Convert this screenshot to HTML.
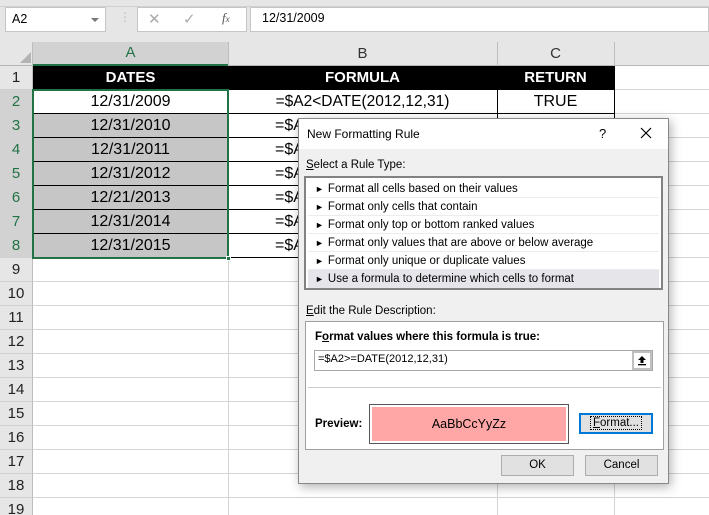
<!DOCTYPE html>
<html><head><meta charset="utf-8"><style>
*{margin:0;padding:0;box-sizing:border-box}
html,body{width:709px;height:515px;overflow:hidden}
body{position:relative;background:#fff;font-family:"Liberation Sans",sans-serif}
.a{position:absolute}
.t{position:absolute;font-size:16px;color:#000;text-align:center;line-height:24px}
.h{font-size:15px;font-weight:bold;color:#fff}
.rh{position:absolute;left:0;width:33px;height:24px;line-height:24px;text-align:center;font-size:15px;color:#222;background:#e6e6e6;border-bottom:1px solid #d0d0d0;border-right:1px solid #bdbdbd}
.d{font-size:11.5px;color:#000;position:absolute;white-space:nowrap}
.li{position:absolute;left:2px;right:2px;height:18px;line-height:18px;font-size:11.5px;padding-left:7px;border-bottom:1px solid #ececec}
.li b{font-weight:normal;font-size:9px;margin-right:4px}
.btn{position:absolute;background:#e1e1e1;border:1px solid #adadad;text-align:center;font-size:11.5px;line-height:18px}
</style></head><body>
<div class="a" style="left:0;top:0;width:709px;height:42px;background:#e6e6e6"></div>
<div class="a" style="left:0;top:6px;width:709px;height:1px;background:#d0d0d0"></div>
<div class="a" style="left:5px;top:7px;width:101px;height:25px;background:#fff;border:1px solid #c6c6c6"></div>
<div class="d" style="left:12px;top:12px;font-size:12.5px">A2</div>
<div class="a" style="left:91px;top:18px;border-left:4px solid transparent;border-right:4px solid transparent;border-top:4px solid #777"></div>
<div class="d" style="left:119px;top:10px;color:#bbb;font-size:12px">⋮</div>
<div class="a" style="left:137px;top:7px;width:110px;height:25px;background:#fff;border:1px solid #c6c6c6"></div>
<div class="d" style="left:148px;top:10px;color:#aaa;font-size:15px">✕</div>
<div class="d" style="left:183px;top:10px;color:#aaa;font-size:15px">✓</div>
<div class="d" style="left:222px;top:10px;color:#555;font-size:13px;font-style:italic;font-family:'Liberation Serif',serif">f<span style="font-size:9px">x</span></div>
<div class="a" style="left:250px;top:7px;width:459px;height:25px;background:#fff;border:1px solid #c6c6c6"></div>
<div class="d" style="left:262px;top:11px;font-size:12.5px">12/31/2009</div>
<div class="a" style="left:0;top:42px;width:709px;height:24px;background:#e6e6e6;border-bottom:1px solid #b5b5b5"></div>
<div class="a" style="left:20px;top:52px;border-left:11px solid transparent;border-bottom:11px solid #b3b3b3"></div>
<div class="a" style="left:33px;top:42px;width:195px;height:24px;background:#d2d2d2;border-bottom:2px solid #217346;text-align:center;line-height:22px;font-size:15px;color:#217346">A</div>
<div class="a" style="left:32px;top:42px;width:1px;height:24px;background:#bdbdbd"></div>
<div class="a" style="left:228px;top:42px;width:1px;height:24px;background:#bdbdbd"></div>
<div class="a" style="left:497px;top:42px;width:1px;height:24px;background:#bdbdbd"></div>
<div class="a" style="left:614px;top:42px;width:1px;height:24px;background:#bdbdbd"></div>
<div class="t" style="left:228px;top:42px;width:269px;line-height:23px;color:#333;font-size:15px">B</div>
<div class="t" style="left:497px;top:42px;width:117px;line-height:23px;color:#333;font-size:15px">C</div>
<div class="a" style="left:33px;top:66px;width:676px;height:449px;background:repeating-linear-gradient(to bottom,transparent 0 23px,#d4d4d4 23px 24px)"></div>
<div class="a" style="left:228px;top:66px;width:1px;height:449px;background:#d4d4d4"></div>
<div class="a" style="left:497px;top:66px;width:1px;height:449px;background:#d4d4d4"></div>
<div class="a" style="left:614px;top:66px;width:1px;height:449px;background:#d4d4d4"></div>
<div class="rh" style="top:66px">1</div>
<div class="rh" style="top:90px;background:#d2d2d2;color:#217346">2</div>
<div class="rh" style="top:114px;background:#d2d2d2;color:#217346">3</div>
<div class="rh" style="top:138px;background:#d2d2d2;color:#217346">4</div>
<div class="rh" style="top:162px;background:#d2d2d2;color:#217346">5</div>
<div class="rh" style="top:186px;background:#d2d2d2;color:#217346">6</div>
<div class="rh" style="top:210px;background:#d2d2d2;color:#217346">7</div>
<div class="rh" style="top:234px;background:#d2d2d2;color:#217346">8</div>
<div class="rh" style="top:258px">9</div>
<div class="rh" style="top:282px">10</div>
<div class="rh" style="top:306px">11</div>
<div class="rh" style="top:330px">12</div>
<div class="rh" style="top:354px">13</div>
<div class="rh" style="top:378px">14</div>
<div class="rh" style="top:402px">15</div>
<div class="rh" style="top:426px">16</div>
<div class="rh" style="top:450px">17</div>
<div class="rh" style="top:474px">18</div>
<div class="rh" style="top:498px">19</div>
<div class="a" style="left:33px;top:66px;width:582px;height:24px;background:#000"></div>
<div class="t h" style="left:33px;top:66px;width:195px">DATES</div>
<div class="t h" style="left:228px;top:66px;width:269px">FORMULA</div>
<div class="t h" style="left:497px;top:66px;width:117px">RETURN</div>
<div class="a" style="left:33px;top:114px;width:195px;height:144px;background:#c6c6c6"></div>
<div class="a" style="left:33px;top:90px;width:582px;height:168px;background:repeating-linear-gradient(to bottom,transparent 0 23px,#000 23px 24px)"></div>
<div class="a" style="left:228px;top:90px;width:1px;height:168px;background:#000"></div>
<div class="a" style="left:497px;top:90px;width:1px;height:168px;background:#000"></div>
<div class="a" style="left:614px;top:66px;width:1px;height:192px;background:#000"></div>
<div class="t" style="left:33px;top:90px;width:195px">12/31/2009</div>
<div class="t" style="left:33px;top:114px;width:195px">12/31/2010</div>
<div class="t" style="left:33px;top:138px;width:195px">12/31/2011</div>
<div class="t" style="left:33px;top:162px;width:195px">12/31/2012</div>
<div class="t" style="left:33px;top:186px;width:195px">12/21/2013</div>
<div class="t" style="left:33px;top:210px;width:195px">12/31/2014</div>
<div class="t" style="left:33px;top:234px;width:195px">12/31/2015</div>
<div class="t" style="left:228px;top:90px;width:269px;font-size:15.5px">=$A2&lt;DATE(2012,12,31)</div>
<div class="t" style="left:275px;top:114px;text-align:left">=$A</div>
<div class="t" style="left:275px;top:138px;text-align:left">=$A</div>
<div class="t" style="left:275px;top:162px;text-align:left">=$A</div>
<div class="t" style="left:275px;top:186px;text-align:left">=$A</div>
<div class="t" style="left:275px;top:210px;text-align:left">=$A</div>
<div class="t" style="left:275px;top:234px;text-align:left">=$A</div>
<div class="t" style="left:497px;top:90px;width:117px">TRUE</div>
<div class="a" style="left:32px;top:89px;width:197px;height:170px;border:2px solid #217346"></div>
<div class="a" style="left:226px;top:256px;width:5px;height:5px;background:#217346;border:1px solid #fff"></div>
<div class="a" style="left:298px;top:118px;width:371px;height:366px;background:#f0f0f0;border:1px solid #888;box-shadow:2px 3px 10px rgba(0,0,0,0.3)">
 <div class="a" style="left:0;top:0;width:369px;height:30px;background:#fff"></div>
 <div class="d" style="left:8px;top:8px;font-size:12px">New Formatting Rule</div>
 <div class="d" style="left:300px;top:7px;font-size:13px">?</div>
 <svg class="a" style="left:341px;top:8px" width="12" height="12"><path d="M1 1L11 11M11 1L1 11" stroke="#000" stroke-width="1.2"/></svg>
 <div class="d" style="left:7px;top:40px"><u>S</u>elect a Rule Type:</div>
 <div class="a" style="left:5px;top:57px;width:359px;height:114px;background:#fff;border:2px solid #828282">
  <div class="li" style="top:2px"><b>►</b>Format all cells based on their values</div>
  <div class="li" style="top:20px"><b>►</b>Format only cells that contain</div>
  <div class="li" style="top:38px"><b>►</b>Format only top or bottom ranked values</div>
  <div class="li" style="top:56px"><b>►</b>Format only values that are above or below average</div>
  <div class="li" style="top:74px"><b>►</b>Format only unique or duplicate values</div>
  <div class="li" style="top:92px;background:#e5e5ea;border:none"><b>►</b>Use a formula to determine which cells to format</div>
 </div>
 <div class="d" style="left:7px;top:186px"><u>E</u>dit the Rule Description:</div>
 <div class="a" style="left:6px;top:202px;width:359px;height:129px;background:#fff;border:1px solid #a0a0a0">
  <div class="d" style="left:9px;top:9px;font-weight:bold">F<u>o</u>rmat values where this formula is true:</div>
  <div class="a" style="left:8px;top:28px;width:339px;height:21px;border:1px solid #a8a8a8"></div>
  <div class="d" style="left:12px;top:31px;font-size:11px">=$A2&gt;=DATE(2012,12,31)</div>
  <div class="a" style="left:326px;top:29px;width:20px;height:19px;background:#fff;border:2px solid #c0c0c0"></div>
  <svg class="a" style="left:331px;top:33px" width="10" height="11"><path d="M5 1L1 5H3.5V8H6.5V5H9Z" fill="#000"/><rect x="1" y="9" width="8" height="1.3" fill="#000"/></svg>
  <div class="a" style="left:2px;top:65px;width:353px;height:1px;background:#ccc"></div>
  <div class="d" style="left:9px;top:96px;font-weight:bold">Preview:</div>
  <div class="a" style="left:63px;top:82px;width:200px;height:40px;border:1px solid #555;padding:2px"><div style="width:100%;height:100%;background:#ffa6a6;text-align:center;line-height:34px;font-size:12.5px">AaBbCcYyZz</div></div>
  <div class="a" style="left:273px;top:91px;width:74px;height:21px;border:2px solid #0078d7;background:#e1e1e1;text-align:center;font-size:11.5px;line-height:16px"><span style="border:1px dotted #000;padding:0 2px"><u>F</u>ormat...</span></div>
 </div>
 <div class="btn" style="left:202px;top:336px;width:73px;height:21px">OK</div>
 <div class="btn" style="left:286px;top:336px;width:73px;height:21px">Cancel</div>
</div>
</body></html>
